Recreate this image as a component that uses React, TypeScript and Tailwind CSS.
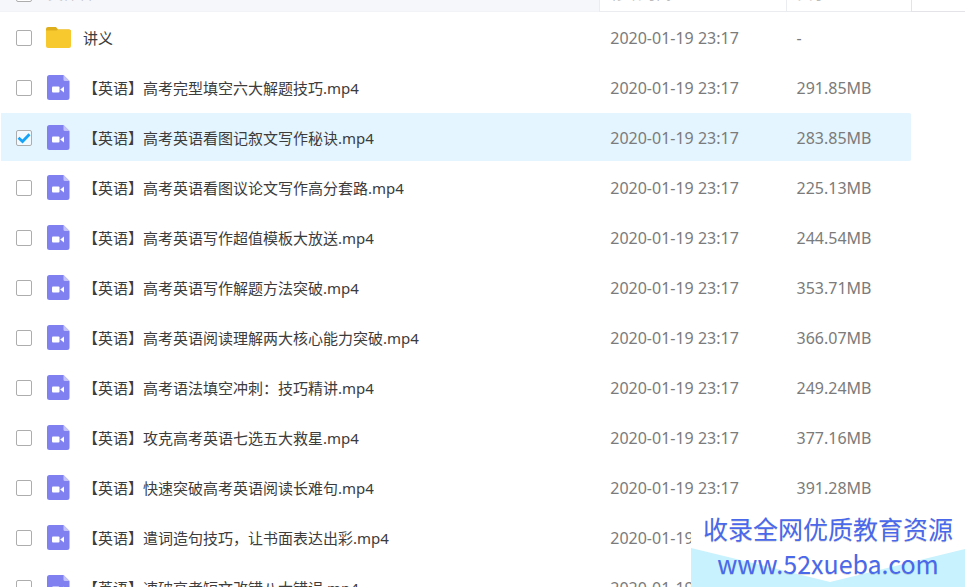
import { useState } from 'react'

type FileItem = {
  name: string
  folder?: boolean
  date: string
  size: string
}

const files: FileItem[] = [
  { name: '讲义', folder: true, date: '2020-01-19 23:17', size: '-' },
  { name: '【英语】高考完型填空六大解题技巧.mp4', date: '2020-01-19 23:17', size: '291.85MB' },
  { name: '【英语】高考英语看图记叙文写作秘诀.mp4', date: '2020-01-19 23:17', size: '283.85MB' },
  { name: '【英语】高考英语看图议论文写作高分套路.mp4', date: '2020-01-19 23:17', size: '225.13MB' },
  { name: '【英语】高考英语写作超值模板大放送.mp4', date: '2020-01-19 23:17', size: '244.54MB' },
  { name: '【英语】高考英语写作解题方法突破.mp4', date: '2020-01-19 23:17', size: '353.71MB' },
  { name: '【英语】高考英语阅读理解两大核心能力突破.mp4', date: '2020-01-19 23:17', size: '366.07MB' },
  { name: '【英语】高考语法填空冲刺：技巧精讲.mp4', date: '2020-01-19 23:17', size: '249.24MB' },
  { name: '【英语】攻克高考英语七选五大救星.mp4', date: '2020-01-19 23:17', size: '377.16MB' },
  { name: '【英语】快速突破高考英语阅读长难句.mp4', date: '2020-01-19 23:17', size: '391.28MB' },
  { name: '【英语】遣词造句技巧，让书面表达出彩.mp4', date: '2020-01-19 23:17', size: '' },
  { name: '【英语】速破高考短文改错八大错误.mp4', date: '2020-01-19 23:17', size: '' },
]

function FolderIcon() {
  return (
    <svg width="26" height="24" viewBox="0 0 26 24" className="block">
      <path d="M0 3a2 2 0 0 1 2-2h8l2 2.500h11a2 2 0 0 1 2 2V12H0z" fill="#dfae1c" />
      <path d="M0 4.500h10.500l2-1H23a2 2 0 0 1 2 2v14.500a2 2 0 0 1-2 2H2a2 2 0 0 1-2-2z" fill="#f7c92e" />
    </svg>
  )
}

function VideoIcon() {
  return (
    <svg width="25" height="26" viewBox="0 0 25 26" className="block">
      <path d="M3 0h14.500l6 6V22.500a2.500 2.500 0 0 1-2.500 2.500H3.500A2.500 2.500 0 0 1 1 22.500V2.500A2.500 2.500 0 0 1 3.500 0z" fill="#8080f0" />
      <path d="M17.500 0l6 6H19a1.500 1.500 0 0 1-1.500-1.500z" fill="#c3c3fa" />
      <rect x="6" y="11.500" width="7.500" height="6" rx="1" fill="#fff" />
      <path d="M14.200 14.500l3.800-2.900v5.900z" fill="#fff" />
    </svg>
  )
}

function CheckBox({ label, checked, onChange }: { label: string; checked: boolean; onChange: () => void }) {
  return (
    <span className="relative block size-4">
      <input
        type="checkbox"
        aria-label={label}
        checked={checked}
        onChange={onChange}
        className="block size-4 appearance-none rounded-xs border border-[#adadad] bg-white checked:bg-[#f2faff]"
      />
      {checked && (
        <svg viewBox="0 0 16 16" className="pointer-events-none absolute inset-0 size-4">
          <path d="M2.500 7.800l4 3.700L13.500 4.200" fill="none" stroke="#15a3fa" strokeWidth="2.800" />
        </svg>
      )}
    </span>
  )
}

export default function App() {
  const [selected, setSelected] = useState<number[]>([2])

  const toggle = (idx: number) => {
    setSelected(selected.includes(idx) ? selected.filter((i) => i !== idx) : [...selected, idx])
  }

  const toggleAll = () => {
    setSelected(selected.length === files.length ? [] : files.map((_, i) => i))
  }

  return (
    <main className="relative h-screen overflow-hidden bg-white font-['Noto_Sans','Noto_Sans_CJK_SC',sans-serif] text-[15px] text-[#3c3c3c]">
      {/* the list is scrolled so that only the bottom edge of the header shows */}
      <table className="-mt-6 w-full table-fixed border-separate border-spacing-0 text-left">
        <colgroup>
          <col className="w-[62.1%]" />
          <col />
          <col className="w-[13%]" />
          <col className="w-[54px]" />
        </colgroup>
        <thead>
          <tr className="h-9 text-[15px] text-[#bbb]">
            <th className="border-b border-[#f2f3f7] bg-[#f6f7fb] p-0 font-normal">
              <div className="flex items-center gap-4 pl-4">
                <CheckBox label="全选" checked={selected.length === files.length} onChange={toggleAll} />
                文件名
              </div>
            </th>
            <th className="border-b border-l border-[#ebecf0] p-0 pl-[11px] font-normal">修改时间</th>
            <th className="border-b border-l border-[#ebecf0] p-0 pl-[11px] font-normal">大小</th>
            <th className="border-b border-l border-[#e4e4e8] p-0" />
          </tr>
        </thead>
        <tbody>
          {files.map((file, idx) => {
            const cell = selected.includes(idx)
              ? 'h-[50px] border-y border-transparent bg-[#e4f5ff] bg-clip-padding pt-0.5'
              : 'h-[50px] border-y border-transparent pt-0.5'
            return (
              <tr key={file.name}>
                <td className={`${cell} border-l`}>
                  <div className="flex items-center pl-[15px]">
                    <CheckBox label={file.name} checked={selected.includes(idx)} onChange={() => toggle(idx)} />
                    <span className="ml-3.5 w-[37px]">{file.folder ? <FolderIcon /> : <VideoIcon />}</span>
                    <span className="truncate">{file.name}</span>
                  </div>
                </td>
                <td className={`${cell} pl-[11px] text-base text-[#7b7b7b]`}>{file.date}</td>
                <td className={`${cell} rounded-r-xs pl-[11px] text-base text-[#7b7b7b]`}>{file.size}</td>
                <td />
              </tr>
            )
          })}
        </tbody>
      </table>

      <a
        href="#"
        className="absolute right-0 bottom-0 block bg-white text-center font-['Noto_Sans_CJK_SC',sans-serif] text-[25px] leading-[35px] text-[#4a68ea]"
      >
        <svg viewBox="0 0 274 40" preserveAspectRatio="none" className="absolute bottom-0 left-0 h-10 w-full">
          <path d="M0 1l139 34L274 2v38H0z" fill="#c8f2fd" />
        </svg>
        <span className="relative block px-3 pb-1.5 text-shadow-2xs">
          收录全网优质教育资源
          <br />
          www.52xueba.com
        </span>
      </a>
    </main>
  )
}
